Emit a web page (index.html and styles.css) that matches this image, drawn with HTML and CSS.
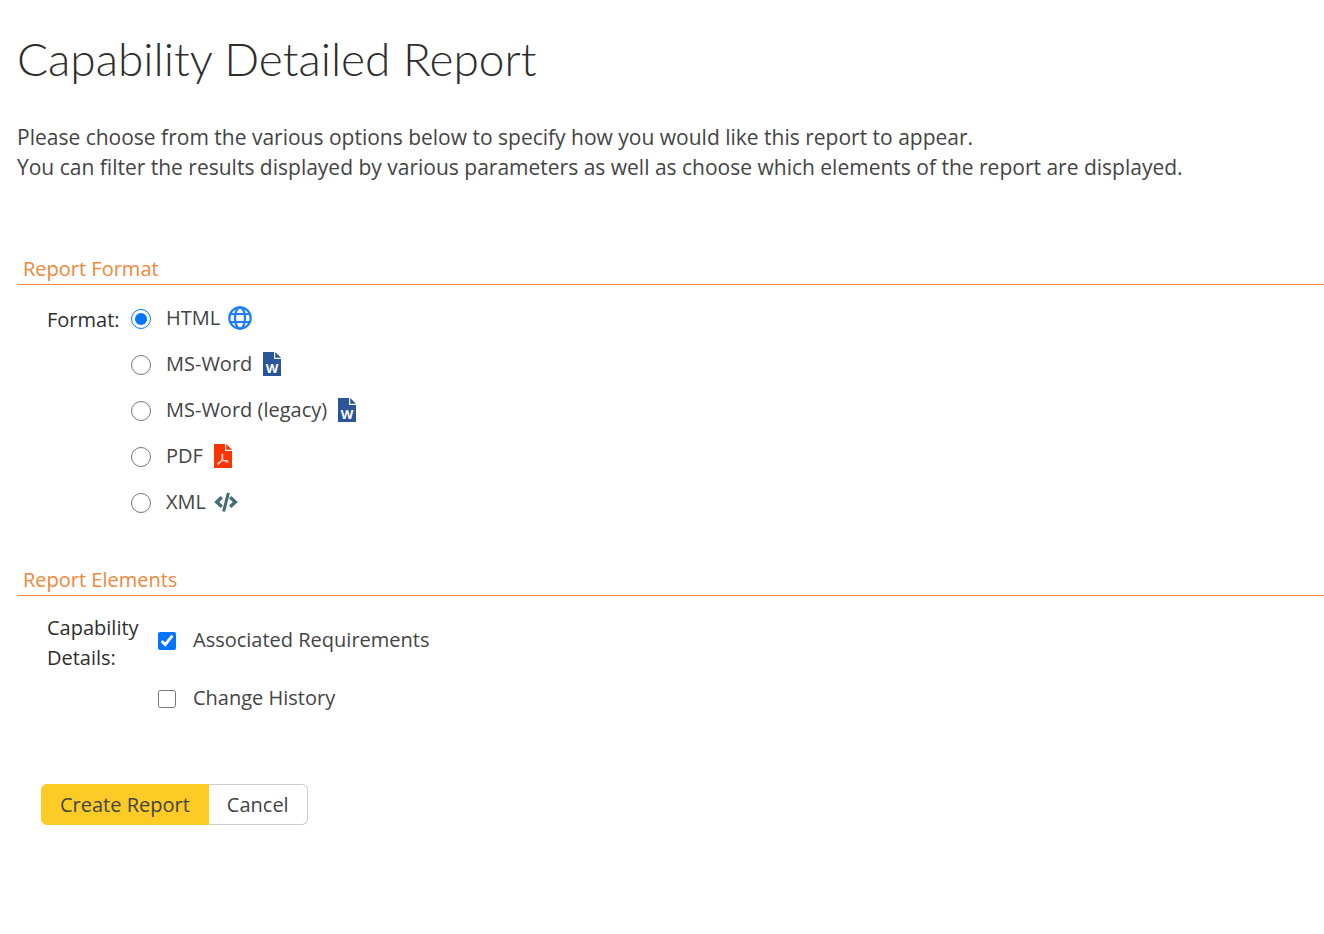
FILE: index.html
```html
<!DOCTYPE html>
<html lang="en">
<head>
<meta charset="utf-8">
<title>Capability Detailed Report</title>
<link rel="stylesheet" href="styles.css">
</head>
<body>
<main class="page">
  <h1 class="title">Capability Detailed Report</h1>
  <p class="intro">Please choose from the various options below to specify how you would like this report to appear.<br>You can filter the results displayed by various parameters as well as choose which elements of the report are displayed.</p>
  <form class="report-form">
    <section class="section">
      <h2 class="section-title">Report Format</h2>
      <div class="field" role="radiogroup" aria-labelledby="format-label">
        <div class="field-label format-label" id="format-label">Format:</div>
        <div class="options">
          <div class="option">
            <input type="radio" class="radio" name="format" id="f-html" checked>
            <label class="option-label" for="f-html">HTML
              <svg class="icon" viewBox="0 0 24 24" fill="none" stroke="#1f7dfa" stroke-width="2.2"><circle cx="12" cy="12" r="10.7"/><ellipse cx="12" cy="12" rx="5" ry="10.7"/><path d="M2 8h20M2 16h20"/></svg>
            </label>
          </div>
          <div class="option">
            <input type="radio" class="radio" name="format" id="f-word">
            <label class="option-label" for="f-word">MS-Word
              <svg class="icon" viewBox="0 0 24 24"><path fill="#2a5699" d="M3.500 0H14v7h7v16.500a.5.5 0 0 1-.5.5h-17a.5.5 0 0 1-.5-.5V.5a.5.5 0 0 1 .5-.5zM15.200 0L21 5.800h-5.800z"/><text class="icon-letter" x="12" y="21">W</text></svg>
            </label>
          </div>
          <div class="option">
            <input type="radio" class="radio" name="format" id="f-legacy">
            <label class="option-label" for="f-legacy">MS-Word (legacy)
              <svg class="icon" viewBox="0 0 24 24"><path fill="#2a5699" d="M3.500 0H14v7h7v16.500a.5.5 0 0 1-.5.5h-17a.5.5 0 0 1-.5-.5V.5a.5.5 0 0 1 .5-.5zM15.200 0L21 5.800h-5.800z"/><text class="icon-letter" x="12" y="21">W</text></svg>
            </label>
          </div>
          <div class="option">
            <input type="radio" class="radio" name="format" id="f-pdf">
            <label class="option-label" for="f-pdf">PDF
              <svg class="icon" viewBox="0 0 24 24"><path fill="#ff3300" d="M3.500 0H14v7h7v16.500a.5.5 0 0 1-.5.5h-17a.5.5 0 0 1-.5-.5V.5a.5.5 0 0 1 .5-.5zM15.200 0L21 5.800h-5.800z"/><path fill="none" stroke="#fff" stroke-width="1" stroke-linejoin="round" d="M11.300 9.800c-1 .2-.7 2.600.1 4.300 1 2.300 3.400 4.400 5 4.200 1.600-.3.800-1.900-1.300-1.900-2.900 0-6.200.9-7.900 2.400-1.200 1.100-.2 2.400 1 1 1.500-1.700 3-4.700 3.500-7 .3-1.500.3-3-.4-3z"/></svg>
            </label>
          </div>
          <div class="option">
            <input type="radio" class="radio" name="format" id="f-xml">
            <label class="option-label" for="f-xml">XML
              <svg class="icon" viewBox="0 0 24 24" fill="none" stroke="#466b75" stroke-width="3.4"><path d="M7.800 7.200L2.700 12l5.100 4.800M16.200 7.200l5.100 4.800-5.100 4.800"/><path d="M14.400 2.800L9.600 21.500" stroke-width="3"/></svg>
            </label>
          </div>
        </div>
      </div>
    </section>
    <section class="section">
      <h2 class="section-title">Report Elements</h2>
      <div class="field" role="group" aria-labelledby="details-label">
        <div class="field-label details-label" id="details-label">Capability<br>Details:</div>
        <div class="checks">
          <div class="option">
            <input type="checkbox" class="checkbox" id="c-req" checked>
            <label class="option-label" for="c-req">Associated Requirements</label>
          </div>
          <div class="option">
            <input type="checkbox" class="checkbox" id="c-hist">
            <label class="option-label" for="c-hist">Change History</label>
          </div>
        </div>
      </div>
    </section>
    <div class="actions">
      <button type="submit" class="button primary">Create Report</button><button type="button" class="button">Cancel</button>
    </div>
  </form>
</main>
</body>
</html>
```
FILE: styles.css
```css
* { box-sizing: border-box; }
body {
  margin: 0;
  background: #fff;
  color: #444;
  font: 400 20px/30px "Open Sans", "Noto Sans", sans-serif;
}
.page { padding: 31px 0 32px 17px; }
.title {
  margin: 0;
  color: #2e2e2e;
  font: 300 46px/56px Lato, sans-serif;
}
.intro { margin: 35px 0 72px; font-size: 21px; }
.section-title {
  margin: 0;
  padding: 0 6px;
  border-bottom: 1px solid #f0873a;
  color: #f0873a;
  font-size: 20px;
  font-weight: 400;
  line-height: 30px;
}
.field { display: flex; padding-left: 30px; }
.field-label { color: #2e2e2e; font-weight: 500; }
.format-label { min-width: 84px; padding-top: 20px; }
.details-label { min-width: 111px; padding-top: 17px; }
.options {
  display: grid;
  grid-auto-rows: 46px;
  padding: 10px 0 40px;
}
.checks {
  display: grid;
  grid-auto-rows: 58px;
  padding: 15px 0 57px;
}
.option { display: flex; align-items: center; }
.option-label { display: flex; align-items: center; gap: 8px; }
.radio { width: 20px; height: 20px; margin: 2px 15px 0 0; }
.checkbox { width: 18px; height: 18px; margin: 2px 17px 0 0; }
.icon { width: 24px; height: 24px; }
.icon-letter {
  fill: #fff;
  font: 700 13px "Open Sans", sans-serif;
  text-anchor: middle;
}
.actions { display: flex; padding-left: 24px; }
.button {
  padding: 4px 18px;
  border: 1px solid #ccc;
  border-left: 0;
  border-radius: 0 6px 6px 0;
  background: #fff;
  color: #444;
  font: inherit;
  line-height: 31px;
}
.button.primary {
  border: 1px solid #fdcb26;
  border-radius: 6px 0 0 6px;
  background: #fdcb26;
}
```
